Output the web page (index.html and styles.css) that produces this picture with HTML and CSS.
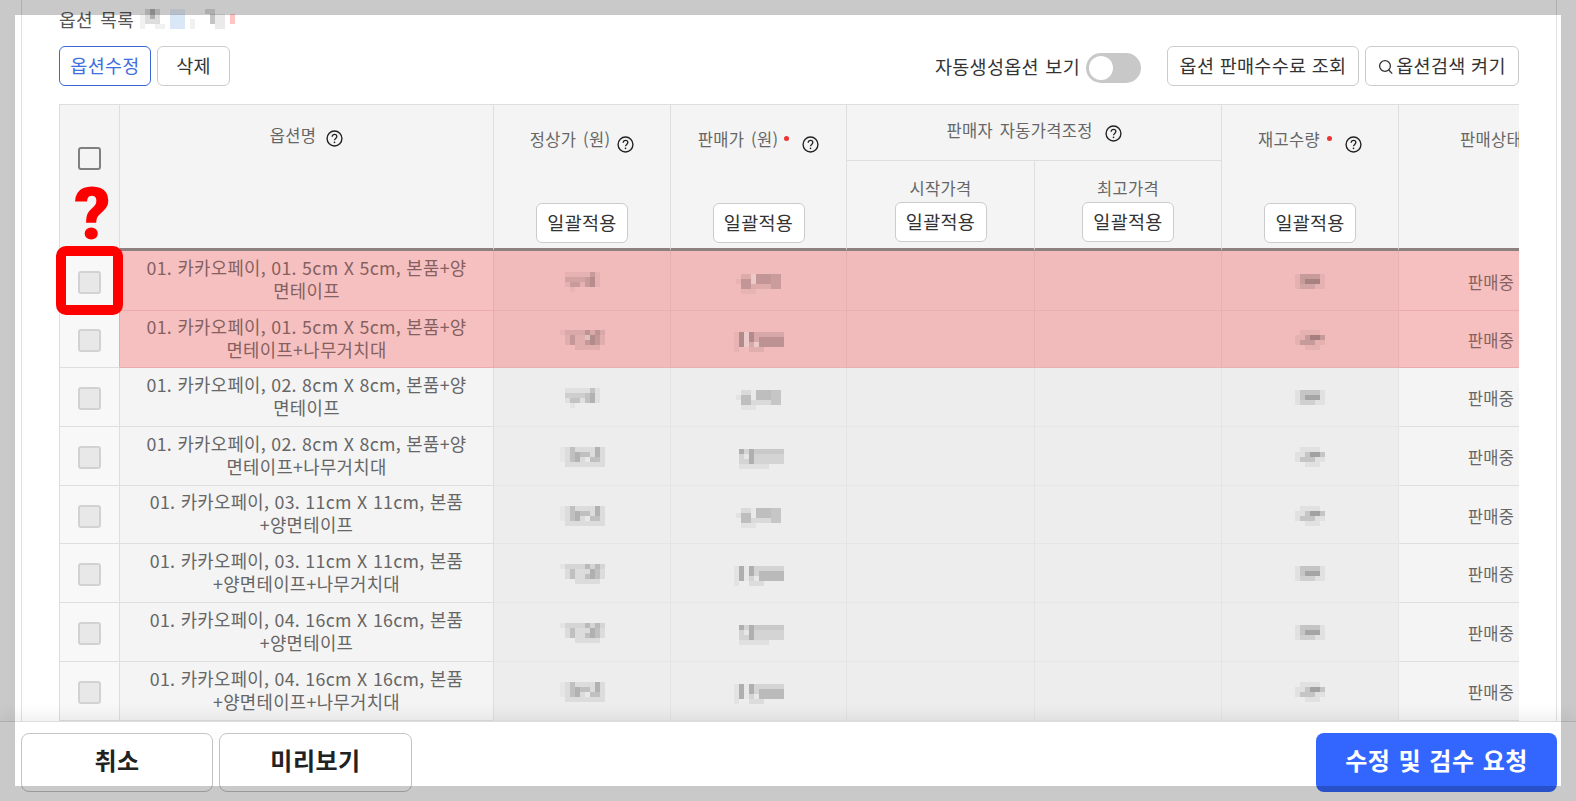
FILE: index.html
```html
<!DOCTYPE html>
<html lang="ko">
<head>
    <meta charset="UTF-8">
    <meta name="viewport" content="width=device-width, initial-scale=1.0">
    <title>옵션 목록</title>
    <link rel="stylesheet" href="styles.css">
</head>
<body>
    <svg class="defs" width="0" height="0">
        <symbol id="help" viewBox="0 0 16 16">
            <circle cx="8" cy="8" r="7" fill="none" stroke="#222" stroke-width="1.3"/>
            <path d="M5.8 6.3c0-1.3 1-2.1 2.2-2.1s2.2.8 2.2 2c0 1.7-2.2 1.7-2.2 3.4" fill="none" stroke="#222" stroke-width="1.2"/>
            <circle cx="8" cy="11.6" r=".8" fill="#222"/>
        </symbol>
        <symbol id="title-blur" viewBox="0 0 100 20">
            <path opacity=".08" d="M0 5h5v15h-5zM15 15h10v5h-10zM50 10h5v10h-5z"/>
            <path opacity=".2" d="M5 0h15v15h-15zM65 0h10v5h-10z"/>
            <path opacity=".35" d="M10 0h5v10h-5zM70 5h5v10h-5z"/>
            <path fill="#5a97dc" opacity=".35" d="M30 5h15v15h-15z"/>
            <path fill="#5a97dc" opacity=".18" d="M30 0h15v5h-15z"/>
            <path opacity=".12" d="M75 5h10v15h-10z"/>
            <path fill="#f00" opacity=".35" d="M90 5h5v10h-5z"/>
        </symbol>
        <symbol id="reg-a" viewBox="0 0 35 20">
            <path opacity=".08" d="M0 0h35v15h-35z"/>
            <path opacity=".12" d="M5 5h15v5h-15zM0 5h5v5h-5z"/>
            <path opacity=".2" d="M25 0h5v5h-5zM20 5h5v10h-5zM5 10h10v5h-10z"/>
            <path opacity=".32" d="M25 5h5v10h-5z"/>
            <path opacity=".05" d="M5 15h5v5h-5z"/>
        </symbol>
        <symbol id="reg-b" viewBox="0 0 45 20">
            <path opacity=".05" d="M0 0h45v5h-45z"/>
            <path opacity=".1" d="M5 0h40v15h-40zM15 15h25v5h-25z"/>
            <path opacity=".2" d="M10 5h5v10h-5zM25 0h5v15h-5zM35 0h5v15h-5z"/>
            <path opacity=".32" d="M30 5h5v10h-5z"/>
            <path fill="#fff" opacity=".5" d="M25 5h5v5h-5z"/>
        </symbol>
        <symbol id="reg-c" viewBox="0 0 45 20">
            <path opacity=".04" d="M0 0h5v15h-5z"/>
            <path opacity=".1" d="M5 0h40v20h-40z"/>
            <path opacity=".2" d="M10 0h5v15h-5zM20 5h10v5h-10zM30 10h10v5h-10z"/>
            <path opacity=".3" d="M15 5h5v10h-5zM35 0h5v10h-5z"/>
            <path fill="#fff" opacity=".45" d="M25 10h5v5h-5z"/>
        </symbol>
        <symbol id="sale-a" viewBox="0 0 45 20">
            <path opacity=".06" d="M0 5h5v5h-5zM5 15h15v5h-15z"/>
            <path opacity=".12" d="M5 0h40v15h-40z"/>
            <path opacity=".2" d="M5 5h10v10h-10zM20 0h15v10h-15z"/>
            <path opacity=".14" d="M35 0h10v15h-10z"/>
            <path fill="#fff" opacity=".5" d="M15 0h5v10h-5z"/>
        </symbol>
        <symbol id="sale-b" viewBox="0 0 50 20">
            <path opacity=".06" d="M0 0h5v20h-5z"/>
            <path opacity=".16" d="M5 0h45v15h-45z"/>
            <path opacity=".28" d="M5 0h5v15h-5zM15 0h5v10h-5z"/>
            <path opacity=".2" d="M25 5h25v10h-25z"/>
            <path fill="#fff" opacity=".55" d="M10 0h5v15h-5zM20 10h5v5h-5z"/>
            <path opacity=".1" d="M15 15h15v5h-15z"/>
        </symbol>
        <symbol id="sale-c" viewBox="0 0 50 20">
            <path opacity=".16" d="M5 0h45v15h-45z"/>
            <path opacity=".28" d="M5 0h5v5h-5zM15 0h5v15h-5z"/>
            <path opacity=".08" d="M20 0h30v5h-30zM5 15h30v5h-30z"/>
            <path fill="#fff" opacity=".5" d="M10 5h5v5h-5z"/>
        </symbol>
        <symbol id="stock-a" viewBox="0 0 30 20">
            <path opacity=".07" d="M0 0h30v15h-30z"/>
            <path opacity=".2" d="M5 0h20v10h-20z"/>
            <path opacity=".28" d="M10 5h15v5h-15z"/>
            <path opacity=".12" d="M5 10h15v5h-15z"/>
        </symbol>
        <symbol id="stock-b" viewBox="0 0 30 20">
            <path opacity=".07" d="M0 5h30v10h-30zM5 0h20v5h-20zM10 15h15v5h-15z"/>
            <path opacity=".2" d="M10 5h20v5h-20zM5 10h15v5h-15z"/>
            <path opacity=".3" d="M15 5h10v5h-10z"/>
        </symbol>
    </svg>

    <div class="panel">
        <div class="list-title">
            옵션 목록
            <svg class="title-blur"><use href="#title-blur"/></svg>
        </div>

        <div class="toolbar">
            <button class="btn btn-active">옵션수정</button>
            <button class="btn btn-delete">삭제</button>
            <div class="toolbar-right">
                <span class="toggle-label">자동생성옵션 보기</span>
                <span class="toggle"><span class="toggle-knob"></span></span>
                <button class="btn btn-lookup">옵션 판매수수료 조회</button>
                <button class="btn btn-search">
                    <svg class="search-icon" viewBox="0 0 16 16" fill="none" stroke="#333" stroke-width="1.3">
                        <circle cx="7" cy="7" r="5.4"/>
                        <path d="M10.8 11l3.4 3.6"/>
                    </svg>옵션검색 켜기
                </button>
            </div>
        </div>

        <div class="table-wrap">
            <table class="option-table">
                <colgroup>
                    <col class="col-check">
                    <col class="col-name">
                    <col class="col-reg">
                    <col class="col-sale">
                    <col class="col-start">
                    <col class="col-max">
                    <col class="col-stock">
                    <col class="col-status">
                </colgroup>
                <thead>
                    <tr class="head-top">
                        <th rowspan="2" class="th-check"><span class="checkbox checkbox-head"></span></th>
                        <th rowspan="2" class="th-name">옵션명 <svg class="help"><use href="#help"/></svg></th>
                        <th rowspan="2">
                            <div class="th-stack">
                                <div class="th-label">정상가 (원) <svg class="help"><use href="#help"/></svg></div>
                                <button class="btn btn-apply">일괄적용</button>
                            </div>
                        </th>
                        <th rowspan="2">
                            <div class="th-stack">
                                <div class="th-label">판매가 (원)<i class="req"></i> <svg class="help help-far"><use href="#help"/></svg></div>
                                <button class="btn btn-apply">일괄적용</button>
                            </div>
                        </th>
                        <th colspan="2" class="th-group">판매자 자동가격조정 <svg class="help"><use href="#help"/></svg></th>
                        <th rowspan="2">
                            <div class="th-stack">
                                <div class="th-label">재고수량<i class="req req-far"></i> <svg class="help help-far"><use href="#help"/></svg></div>
                                <button class="btn btn-apply">일괄적용</button>
                            </div>
                        </th>
                        <th rowspan="2" class="th-status">판매상태</th>
                    </tr>
                    <tr class="head-sub">
                        <th><div class="sub-label">시작가격</div><button class="btn btn-apply">일괄적용</button></th>
                        <th><div class="sub-label">최고가격</div><button class="btn btn-apply">일괄적용</button></th>
                    </tr>
                </thead>
                <tbody>
                    <tr class="row-flagged row-tall">
                        <td class="td-check"><span class="checkbox"></span></td>
                        <td class="td-name">01. 카카오페이, 01. 5cm X 5cm, 본품+양<br>면테이프</td>
                        <td class="td-blur"><svg class="blur blur-reg up"><use href="#reg-a"/></svg></td>
                        <td class="td-blur"><svg class="blur blur-sale"><use href="#sale-a"/></svg></td>
                        <td class="td-blur"></td>
                        <td class="td-blur"></td>
                        <td class="td-blur"><svg class="blur blur-stock"><use href="#stock-a"/></svg></td>
                        <td class="td-status">판매중</td>
                    </tr>
                    <tr class="row-flagged row-short">
                        <td class="td-check"><span class="checkbox"></span></td>
                        <td class="td-name">01. 카카오페이, 01. 5cm X 5cm, 본품+양<br>면테이프+나무거치대</td>
                        <td class="td-blur"><svg class="blur blur-wide up"><use href="#reg-b"/></svg></td>
                        <td class="td-blur"><svg class="blur blur-sale2"><use href="#sale-b"/></svg></td>
                        <td class="td-blur"></td>
                        <td class="td-blur"></td>
                        <td class="td-blur"><svg class="blur blur-stock up"><use href="#stock-b"/></svg></td>
                        <td class="td-status">판매중</td>
                    </tr>
                    <tr>
                        <td class="td-check"><span class="checkbox"></span></td>
                        <td class="td-name">01. 카카오페이, 02. 8cm X 8cm, 본품+양<br>면테이프</td>
                        <td class="td-blur"><svg class="blur blur-reg up"><use href="#reg-a"/></svg></td>
                        <td class="td-blur"><svg class="blur blur-sale"><use href="#sale-a"/></svg></td>
                        <td class="td-blur"></td>
                        <td class="td-blur"></td>
                        <td class="td-blur"><svg class="blur blur-stock"><use href="#stock-a"/></svg></td>
                        <td class="td-status">판매중</td>
                    </tr>
                    <tr>
                        <td class="td-check"><span class="checkbox"></span></td>
                        <td class="td-name">01. 카카오페이, 02. 8cm X 8cm, 본품+양<br>면테이프+나무거치대</td>
                        <td class="td-blur"><svg class="blur blur-wide up"><use href="#reg-c"/></svg></td>
                        <td class="td-blur"><svg class="blur blur-sale2"><use href="#sale-c"/></svg></td>
                        <td class="td-blur"></td>
                        <td class="td-blur"></td>
                        <td class="td-blur"><svg class="blur blur-stock up"><use href="#stock-b"/></svg></td>
                        <td class="td-status">판매중</td>
                    </tr>
                    <tr class="row-trim">
                        <td class="td-check"><span class="checkbox"></span></td>
                        <td class="td-name">01. 카카오페이, 03. 11cm X 11cm, 본품<br>+양면테이프</td>
                        <td class="td-blur"><svg class="blur blur-wide up"><use href="#reg-c"/></svg></td>
                        <td class="td-blur"><svg class="blur blur-sale"><use href="#sale-a"/></svg></td>
                        <td class="td-blur"></td>
                        <td class="td-blur"></td>
                        <td class="td-blur"><svg class="blur blur-stock up"><use href="#stock-b"/></svg></td>
                        <td class="td-status">판매중</td>
                    </tr>
                    <tr>
                        <td class="td-check"><span class="checkbox"></span></td>
                        <td class="td-name">01. 카카오페이, 03. 11cm X 11cm, 본품<br>+양면테이프+나무거치대</td>
                        <td class="td-blur"><svg class="blur blur-wide up"><use href="#reg-b"/></svg></td>
                        <td class="td-blur"><svg class="blur blur-sale2"><use href="#sale-b"/></svg></td>
                        <td class="td-blur"></td>
                        <td class="td-blur"></td>
                        <td class="td-blur"><svg class="blur blur-stock"><use href="#stock-a"/></svg></td>
                        <td class="td-status">판매중</td>
                    </tr>
                    <tr>
                        <td class="td-check"><span class="checkbox"></span></td>
                        <td class="td-name">01. 카카오페이, 04. 16cm X 16cm, 본품<br>+양면테이프</td>
                        <td class="td-blur"><svg class="blur blur-wide up"><use href="#reg-b"/></svg></td>
                        <td class="td-blur"><svg class="blur blur-sale2"><use href="#sale-c"/></svg></td>
                        <td class="td-blur"></td>
                        <td class="td-blur"></td>
                        <td class="td-blur"><svg class="blur blur-stock"><use href="#stock-a"/></svg></td>
                        <td class="td-status">판매중</td>
                    </tr>
                    <tr>
                        <td class="td-check"><span class="checkbox"></span></td>
                        <td class="td-name">01. 카카오페이, 04. 16cm X 16cm, 본품<br>+양면테이프+나무거치대</td>
                        <td class="td-blur"><svg class="blur blur-wide up"><use href="#reg-c"/></svg></td>
                        <td class="td-blur"><svg class="blur blur-sale2"><use href="#sale-b"/></svg></td>
                        <td class="td-blur"></td>
                        <td class="td-blur"></td>
                        <td class="td-blur"><svg class="blur blur-stock up"><use href="#stock-b"/></svg></td>
                        <td class="td-status">판매중</td>
                    </tr>
                </tbody>
            </table>
        </div>
    </div>

    <div class="footer">
        <button class="footer-btn">취소</button>
        <button class="footer-btn footer-preview">미리보기</button>
        <button class="footer-btn footer-primary">수정 및 검수 요청</button>
    </div>

    <!-- annotation marks and the dimmed frame lie over the page -->
    <div class="question-mark">?</div>
    <div class="red-box"></div>
    <div class="spotlight"></div>
</body>
</html>
```

FILE: styles.css
```css
:root {
    --blue: #3366ff;
    --line: #dedede;
    --head-bg: #f4f4f4;
    --text: #666;
}

html, body {
    height: 801px;
    overflow: hidden;
}

body {
    margin: 0;
    background: #fff;
    color: #333;
    font-family: "Noto Sans CJK KR", "Noto Sans", sans-serif;
}

.defs {
    display: block;
    height: 0;
}

.panel {
    box-sizing: border-box;
    height: 801px;
    margin-left: 21px;
    margin-right: 19px;
    padding: 5px 0 0 37px;
    border-left: 1px solid #e0e0e0;
    border-right: 1px solid #e0e0e0;
}

.list-title {
    display: flex;
    align-items: center;
    gap: 6px;
    height: 28px;
    font-size: 18px;
    letter-spacing: 0.4px;
    word-spacing: 2px;
    color: #555;
}

.title-blur {
    width: 100px;
    height: 20px;
    opacity: 0.65;
}

.toolbar {
    display: flex;
    align-items: stretch;
    gap: 6px;
    width: 1460px;
    height: 40px;
    margin-top: 13px;
}

.btn {
    box-sizing: border-box;
    height: 40px;
    padding: 0 0 3px;
    background: #fff;
    border: 1px solid #ccc;
    border-radius: 6px;
    color: #333;
    font-family: inherit;
    font-size: 18.5px;
    letter-spacing: 0.3px;
    cursor: pointer;
}

.btn-active {
    width: 92px;
    border-color: #3b66d8;
    color: #3f6fe0;
}

.btn-delete {
    width: 73px;
}

.toolbar-right {
    display: flex;
    align-items: center;
    margin-left: auto;
}

.toggle-label {
    font-size: 18.5px;
    letter-spacing: 0.3px;
    word-spacing: 1px;
    margin-right: 6px;
}

.toggle {
    display: flex;
    align-items: center;
    box-sizing: border-box;
    width: 55px;
    height: 30px;
    margin-top: 3px;
    padding-left: 3px;
    background: #c8c8c8;
    border-radius: 15px;
}

.toggle-knob {
    width: 24px;
    height: 24px;
    background: #fff;
    border-radius: 50%;
}

.btn-lookup {
    width: 192px;
    margin-left: 26px;
}

.btn-search {
    display: flex;
    align-items: center;
    justify-content: center;
    width: 154px;
    margin-left: 6px;
}

.search-icon {
    width: 16px;
    height: 16px;
    margin: 4px 2px 0 0;
}

.table-wrap {
    width: 1460px;
    margin-top: 18px;
    overflow: hidden;
}

.option-table {
    width: 1525px;
    table-layout: fixed;
    border-collapse: separate;
    border-spacing: 0;
    border-top: 1px solid var(--line);
    border-left: 1px solid var(--line);
}

.col-check { width: 60px; }
.col-name { width: 374px; }
.col-reg { width: 177px; }
.col-sale { width: 176px; }
.col-start { width: 188px; }
.col-max { width: 187px; }
.col-stock { width: 177px; }
.col-status { width: 185px; }

.option-table th {
    box-sizing: border-box;
    padding: 0;
    background: var(--head-bg);
    border-right: 1px solid var(--line);
    color: #666;
    font-size: 16.5px;
    font-weight: 400;
    letter-spacing: 0.3px;
    word-spacing: 2px;
    vertical-align: top;
}

.head-top {
    height: 56px;
}

.head-sub {
    height: 90px;
}

.head-top th[rowspan],
.head-sub th {
    border-bottom: 3px solid #8c8080;
}

.option-table .th-name {
    padding-top: 18px;
}

.option-table .th-group {
    height: 56px;
    padding-top: 13px;
    border-bottom: 1px solid var(--line);
}

.th-stack {
    display: flex;
    flex-direction: column;
    align-items: center;
    justify-content: space-between;
    box-sizing: border-box;
    height: 138px;
    padding-top: 23px;
}

.th-label {
    display: flex;
    align-items: center;
    height: 22px;
}

.option-table .th-status {
    padding-top: 22px;
    text-align: center;
}

.help {
    flex: none;
    width: 17px;
    height: 17px;
    margin-left: 7px;
    vertical-align: -5px;
}

.th-name .help {
    margin-left: 3px;
}

.th-group .help {
    margin-left: 5px;
}

.th-label .help {
    margin-top: 10px;
}

.th-label .help-far {
    margin-left: 13px;
}

.req {
    flex: none;
    width: 5px;
    height: 5px;
    margin: -2px 0 0 6px;
    background: #e33;
    border-radius: 50%;
}

.req-far {
    margin-left: 7px;
}

.sub-label {
    margin-top: 15px;
    height: 26px;
}

.btn-apply {
    flex: none;
    width: 92px;
}

.checkbox {
    display: block;
    box-sizing: border-box;
    width: 23px;
    height: 23px;
    margin: 0 auto;
    background: #e8e8e8;
    border: 2px solid #d2d2d2;
    border-radius: 3px;
}

.checkbox-head {
    margin-top: 42px;
    background: transparent;
    border-color: #808080;
}

.option-table td {
    box-sizing: border-box;
    height: 59px;
    padding: 0;
    border-right: 1px solid var(--line);
    border-bottom: 1px solid var(--line);
    color: var(--text);
    font-size: 17.8px;
    line-height: 23px;
    letter-spacing: 0.3px;
    text-align: center;
    vertical-align: middle;
    background: var(--head-bg);
}

.option-table .row-tall td {
    height: 60px;
}

.option-table .row-short td {
    height: 57px;
}

.option-table .row-trim td {
    height: 58px;
}

.option-table .td-check {
    padding-top: 3px;
    background: #f8f8f8;
}

.option-table .td-name {
    padding-bottom: 3px;
}

.option-table .td-blur {
    background: #ededed;
    border-bottom-color: #e6e6e6;
    border-right-color: #e4e4e4;
}

.option-table .td-status {
    padding-top: 3px;
    font-size: 16.5px;
}

.row-flagged td {
    background: #f6c0c0;
    border-color: #e9abab;
    color: #85605f;
}

.option-table .row-flagged .td-blur {
    background: #f2bbbb;
    border-color: #e9b0b0;
}

.option-table .row-flagged .td-check {
    background: #f8f8f8;
    border-bottom-color: var(--line);
}

.blur {
    display: block;
    height: 20px;
    margin: 0 auto;
    opacity: 0.65;
    transform: translateY(3px);
}

.blur.up {
    transform: translateY(1px);
}

.blur-reg { width: 35px; }
.blur-wide { width: 45px; }
.blur-sale { width: 45px; }
.blur-sale2 { width: 50px; }
.blur-stock { width: 30px; }

.footer {
    position: fixed;
    left: 0;
    right: 0;
    bottom: 0;
    display: flex;
    gap: 6px;
    box-sizing: border-box;
    height: 80px;
    padding: 11px 19px 9px 21px;
    background: #fff;
    border-top: 1px solid #ddd;
    box-shadow: 0 -8px 12px rgba(0, 0, 0, 0.05);
}

.footer-btn {
    width: 192px;
    padding: 0 0 7px;
    background: #fff;
    border: 1px solid #c4c4c4;
    border-radius: 8px;
    color: #222;
    font-family: inherit;
    font-size: 24px;
    font-weight: 700;
    letter-spacing: 0.5px;
    cursor: pointer;
}

.footer-preview {
    width: 193px;
}

.footer-primary {
    width: 241px;
    margin-left: auto;
    background: var(--blue);
    border: none;
    color: #fff;
    word-spacing: 1px;
}

.question-mark {
    position: fixed;
    left: 74px;
    top: 179px;
    color: #f00;
    font-family: Roboto, sans-serif;
    font-size: 72px;
    font-weight: 900;
    line-height: 72px;
}

.red-box {
    position: fixed;
    left: 56px;
    top: 246px;
    box-sizing: border-box;
    width: 67px;
    height: 69px;
    border: 10px solid #f00;
    border-radius: 10px;
}

.spotlight {
    position: fixed;
    left: 15px;
    top: 15px;
    right: 15px;
    bottom: 15px;
    box-shadow: 0 0 0 40px rgba(0, 0, 0, 0.21);
    pointer-events: none;
}
```
